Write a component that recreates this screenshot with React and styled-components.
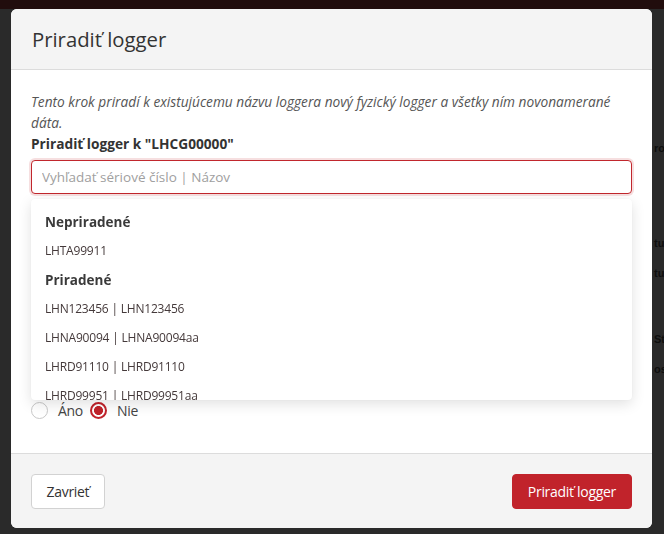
import React from 'react'
import styled, { createGlobalStyle } from 'styled-components'

const GlobalStyle = createGlobalStyle`
  html, body {
    margin: 0;
    padding: 0;
    height: 100%;
  }
  body {
    background: #2a2a2a;
    font-family: "Open Sans", "Noto Sans", sans-serif;
    color: #333;
    overflow: hidden;
  }
`

const groups = [
  { title: 'Nepriradené', items: ['LHTA99911'] },
  {
    title: 'Priradené',
    items: [
      'LHN123456 | LHN123456',
      'LHNA90094 | LHNA90094aa',
      'LHRD91110 | LHRD91110',
      'LHRD99951 | LHRD99951aa',
      'LHRD99960 | LHRD99960',
    ],
  },
]

// slivers of the page behind the backdrop, seen at the right edge
const backWords = [
  { text: 'ro', gap: 131 },
  { text: 'tu', gap: 79 },
  { text: 'tu', gap: 14 },
  { text: 'Sta', gap: 50 },
  { text: 'os', gap: 14 },
]

const App = () => {
  return (
    <>
      <GlobalStyle />
      <Screen>
        <TopStrip />
        <BackPage>
          {backWords.map((w, i) => (
            <BackWord key={i} $gap={w.gap}>{w.text}</BackWord>
          ))}
        </BackPage>
        <Modal>
          <Header>
            <Title>Priradiť logger</Title>
          </Header>
          <Body>
            <Hint>
              Tento krok priradí k existujúcemu názvu loggera nový fyzický logger a všetky ním novonamerané dáta.
            </Hint>
            <Label>Priradiť logger k "LHCG00000"</Label>
            <Field>
              <SearchInput autoFocus placeholder="Vyhľadať sériové číslo | Názov" />
              <Dropdown>
                {groups.map((g) => (
                  <React.Fragment key={g.title}>
                    <GroupTitle>{g.title}</GroupTitle>
                    {g.items.map((it) => (
                      <Option key={it}>{it}</Option>
                    ))}
                  </React.Fragment>
                ))}
              </Dropdown>
            </Field>
            <Hidden />
            <RadioRow>
              <RadioItem>
                <Radio />
                <span>Áno</span>
              </RadioItem>
              <RadioItem>
                <Radio $checked />
                <span>Nie</span>
              </RadioItem>
            </RadioRow>
          </Body>
          <Footer>
            <Button>Zavrieť</Button>
            <Button $primary>Priradiť logger</Button>
          </Footer>
        </Modal>
      </Screen>
    </>
  )
}

export default App

const Screen = styled.div`
  position: relative;
  width: 664px;
  height: 534px;
  overflow: hidden;
  background: #2a2a2a;
`

const TopStrip = styled.div`
  height: 9px;
  background: #210d0d;
`

const BackPage = styled.div`
  display: flex;
  flex-direction: column;
  padding-left: 654px;
`

const BackWord = styled.div`
  margin-top: ${(p) => p.$gap}px;
  font-family: "Liberation Sans", sans-serif;
  font-weight: bold;
  font-size: 11px;
  line-height: 16px;
  color: #0e0e0e;
  white-space: nowrap;
`

const Modal = styled.div`
  position: absolute;
  top: 9px;
  left: 11px;
  width: 641px;
  height: 519px;
  display: flex;
  flex-direction: column;
  background: #fff;
  border-radius: 6px;
  overflow: hidden;
`

const Header = styled.div`
  height: 61px;
  display: flex;
  align-items: center;
  padding: 0 21px;
  background: #f4f4f4;
  border-bottom: 1px solid #dcdcdc;
  box-sizing: border-box;
`

const Title = styled.h2`
  margin: 0;
  font-size: 20.3px;
  font-weight: 400;
  color: #333;
`

const Body = styled.div`
  flex: 1;
  padding: 21px 20px 0;
  display: flex;
  flex-direction: column;
`

const Hint = styled.p`
  margin: 0;
  font-style: italic;
  font-size: 13.7px;
  line-height: 21px;
  color: #555;
`

const Label = styled.div`
  font-size: 13.7px;
  font-weight: 700;
  line-height: 21px;
  color: #333;
`

const Field = styled.div`
  position: relative;
  margin-top: 6px;
`

const SearchInput = styled.input`
  display: block;
  width: 100%;
  height: 34px;
  box-sizing: border-box;
  padding: 0 10px;
  border: 1px solid #c1272d;
  border-radius: 4px;
  box-shadow: 0 0 0 2px rgba(193, 39, 45, 0.15);
  font-family: "Open Sans", sans-serif;
  font-size: 13.5px;
  color: #333;
  outline: none;
  &::placeholder {
    color: #a0a0a0;
  }
`

const Dropdown = styled.div`
  position: absolute;
  top: 39px;
  left: 0;
  right: 0;
  height: 201px;
  padding-top: 8px;
  box-sizing: border-box;
  overflow: hidden;
  background: #fff;
  border-radius: 4px;
  box-shadow: 0 4px 14px rgba(0, 0, 0, 0.12), 0 0 2px rgba(0, 0, 0, 0.06);
  z-index: 2;
`

const GroupTitle = styled.div`
  height: 29px;
  display: flex;
  align-items: center;
  padding: 0 14px;
  font-size: 13.5px;
  font-weight: 700;
  color: #3a3a3a;
`

const Option = styled.div`
  height: 29px;
  display: flex;
  align-items: center;
  padding: 0 14px;
  font-size: 12px;
  color: #44393a;
  letter-spacing: -0.2px;
`

const Hidden = styled.div`
  height: 207px;
`

const RadioRow = styled.div`
  display: flex;
  align-items: center;
  gap: 7px;
`

const RadioItem = styled.label`
  display: flex;
  align-items: center;
  gap: 10px;
  font-size: 14px;
  color: #444;
  letter-spacing: -0.3px;
`

const Radio = styled.span`
  width: 17px;
  height: 17px;
  box-sizing: border-box;
  border-radius: 50%;
  border: ${(p) => (p.$checked ? '2px solid #c1232b' : '1.5px solid #c8c8c8')};
  background: ${(p) =>
    p.$checked ? 'radial-gradient(circle, #c1232b 0 4.2px, #fff 4.8px)' : '#fff'};
`

const Footer = styled.div`
  height: 75px;
  box-sizing: border-box;
  display: flex;
  align-items: center;
  justify-content: space-between;
  padding: 0 20px;
  background: #f4f4f4;
  border-top: 1px solid #dcdcdc;
`

const Button = styled.button`
  height: 35px;
  padding: 0 ${(p) => (p.$primary ? '15px' : '14.5px')};
  border-radius: 4px;
  border: 1px solid ${(p) => (p.$primary ? '#c1232b' : '#d2d2d2')};
  background: ${(p) => (p.$primary ? '#c1232b' : '#fff')};
  color: ${(p) => (p.$primary ? '#fff' : '#333')};
  font-family: "Open Sans", sans-serif;
  font-size: 14px;
  letter-spacing: -0.3px;
  cursor: pointer;
`
